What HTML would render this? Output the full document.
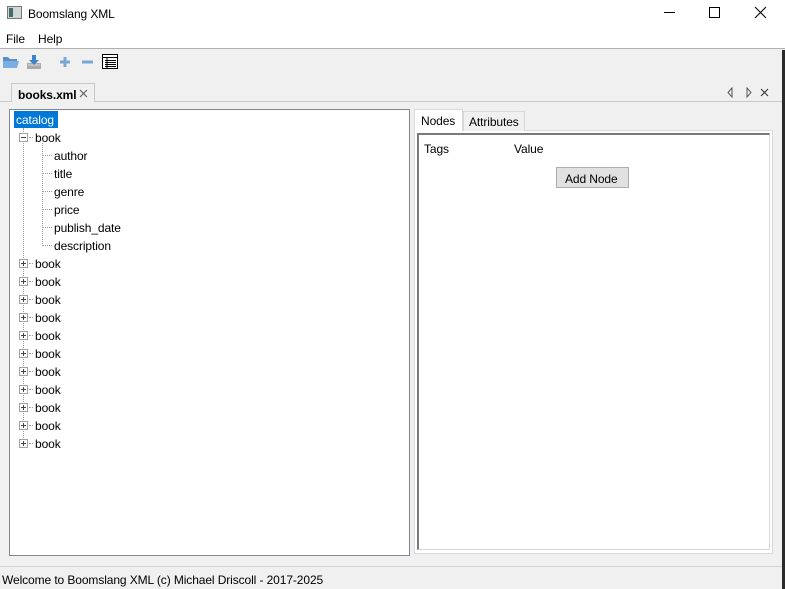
<!DOCTYPE html>
<html><head><style>
*{margin:0;padding:0;box-sizing:border-box}
body{width:785px;height:589px;background:#f0f0f0;font:12px "Liberation Sans",sans-serif;color:#000;position:relative;overflow:hidden}
.a{position:absolute;white-space:nowrap}
.t{position:absolute;white-space:nowrap;line-height:16px;margin-top:1px;letter-spacing:-0.1px}
.box{position:absolute;width:9px;height:9px;border:1px solid #a0a0a0;background:#fff}
.box:before{content:"";position:absolute;left:1px;top:3px;width:5px;height:1px;background:#444}
.plus:after{content:"";position:absolute;left:3px;top:1px;width:1px;height:5px;background:#444}
.hd{position:absolute;height:0;border-top:1px dotted #999}
.vd{position:absolute;width:0;border-left:1px dotted #999}
</style></head><body>
<div class="a" style="left:0;top:0;width:785px;height:48px;background:#fff"></div>
<div class="a" style="left:0;top:48px;width:785px;height:1px;background:#b0b0b0"></div>
<div class="a" style="left:782px;top:50px;width:3px;height:539px;background:#2b2b2b"></div>
<div class="a" style="left:7px;top:6px;width:15px;height:13px;border:1px solid #777;background:#cfd8d8"><div style="position:absolute;left:1px;top:1px;width:4px;height:9px;background:#4a6a6a"></div></div>
<div class="t" style="left:28px;top:5px">Boomslang XML</div>
<div class="a" style="left:664px;top:12px;width:11px;height:1px;background:#000"></div>
<div class="a" style="left:709px;top:7px;width:11px;height:11px;border:1px solid #000"></div>
<svg class="a" style="left:754px;top:6px" width="13" height="13"><path d="M1 1L12 12M12 1L1 12" stroke="#000" stroke-width="1"/></svg>
<div class="t" style="left:6px;top:30px">File</div>
<div class="t" style="left:38px;top:30px">Help</div>
<svg class="a" style="left:2px;top:53px" width="120" height="18">
<path d="M1 4h5l2 2h7v9H1z" fill="#5d8fc4"/><path d="M1 8h16l-2 7H1z" fill="#7aaee0"/>
<path d="M25 10h14v6H25z" fill="#aaa"/><path d="M26 12h12" stroke="#ddd"/><path d="M30 2h4v5h3l-5 5-5-5h3z" fill="#3a86c8"/>
<path d="M58 9h10M63 4v10" stroke="#7aa6d6" stroke-width="3"/>
<path d="M80 9h11" stroke="#7aa6d6" stroke-width="3"/>
<rect x="100.5" y="1.5" width="15" height="14" fill="#fff" stroke="#000"/>
<path d="M101 4.5h15M103 7.5h11M103 9.5h11M103 11.5h11M103 13.5h11M105 4v11" stroke="#000"/>
</svg>
<div class="a" style="left:0;top:101px;width:782px;height:1px;background:#c8c8c8"></div>
<div class="a" style="left:11px;top:83px;width:84px;height:19px;background:#f0f0f0;border:1px solid #c8c8c8;border-bottom:none"></div>
<div class="t" style="left:18px;top:86px;font-weight:bold">books.xml</div>
<svg class="a" style="left:79px;top:89px" width="9" height="9"><path d="M1 1L8 8M8 1L1 8" stroke="#555"/></svg>
<svg class="a" style="left:726px;top:87px" width="45" height="11"><path d="M6 1L2 5.5 6 10z" fill="none" stroke="#555"/><path d="M21 1L25 5.5 21 10z" fill="none" stroke="#555"/><path d="M35 2l7 7M42 2l-7 7" stroke="#333"/></svg>
<div class="a" style="left:9px;top:109px;width:401px;height:447px;background:#fff;border:1px solid #828790"></div>
<div class="a" style="left:14px;top:111px;width:44px;height:17px;background:#0078d7"></div>
<div class="t" style="left:16px;top:111px;color:#fff">catalog</div>
<div class="vd" style="left:23px;top:128px;height:316px"></div>
<div class="vd" style="left:42px;top:143px;height:103px"></div>
<div id="tree"></div>
<div class="a" style="left:414px;top:130px;width:359px;height:424px;border:1px solid #d9d9d9;background:#fff"></div>
<div class="a" style="left:463px;top:111px;width:62px;height:20px;border:1px solid #d9d9d9;border-bottom:none;background:#f0f0f0"></div>
<div class="a" style="left:414px;top:109px;width:49px;height:22px;border:1px solid #d9d9d9;border-bottom:none;background:#fff"></div>
<div class="t" style="left:421px;top:112px">Nodes</div>
<div class="t" style="left:469px;top:113px">Attributes</div>
<div class="a" style="left:417px;top:133px;width:353px;height:417px;border:1px solid #d8d8d8;border-top:2px solid #7a7a7a;border-left:2px solid #7a7a7a;background:#fff"></div>
<div class="t" style="left:424px;top:140px">Tags</div>
<div class="t" style="left:514px;top:140px">Value</div>
<div class="a" style="left:556px;top:167px;width:73px;height:21px;background:#e1e1e1;border:1px solid #adadad"></div>
<div class="t" style="left:565px;top:170px">Add Node</div>
<div class="a" style="left:0;top:566px;width:782px;height:1px;background:#d5d5d5"></div>
<div class="t" style="left:2px;top:571px">Welcome to Boomslang XML (c) Michael Driscoll - 2017-2025</div>
<script>
var h='';var y=137;
function row(txt,x){h+='<div class="t" style="left:'+x+'px;top:'+(y-8)+'px">'+txt+'</div>';}
h+='<div class="box" style="left:19px;top:'+(y-4)+'px"></div><div class="hd" style="left:29px;top:'+y+'px;width:4px"></div>';row('book',35);y+=18;
['author','title','genre','price','publish_date','description'].forEach(function(s){h+='<div class="hd" style="left:43px;top:'+y+'px;width:9px"></div>';row(s,54);y+=18;});
for(var i=0;i<11;i++){h+='<div class="box plus" style="left:19px;top:'+(y-4)+'px"></div><div class="hd" style="left:29px;top:'+y+'px;width:4px"></div>';row('book',35);y+=18;}
document.getElementById('tree').outerHTML=h;
</script>
</body></html>
